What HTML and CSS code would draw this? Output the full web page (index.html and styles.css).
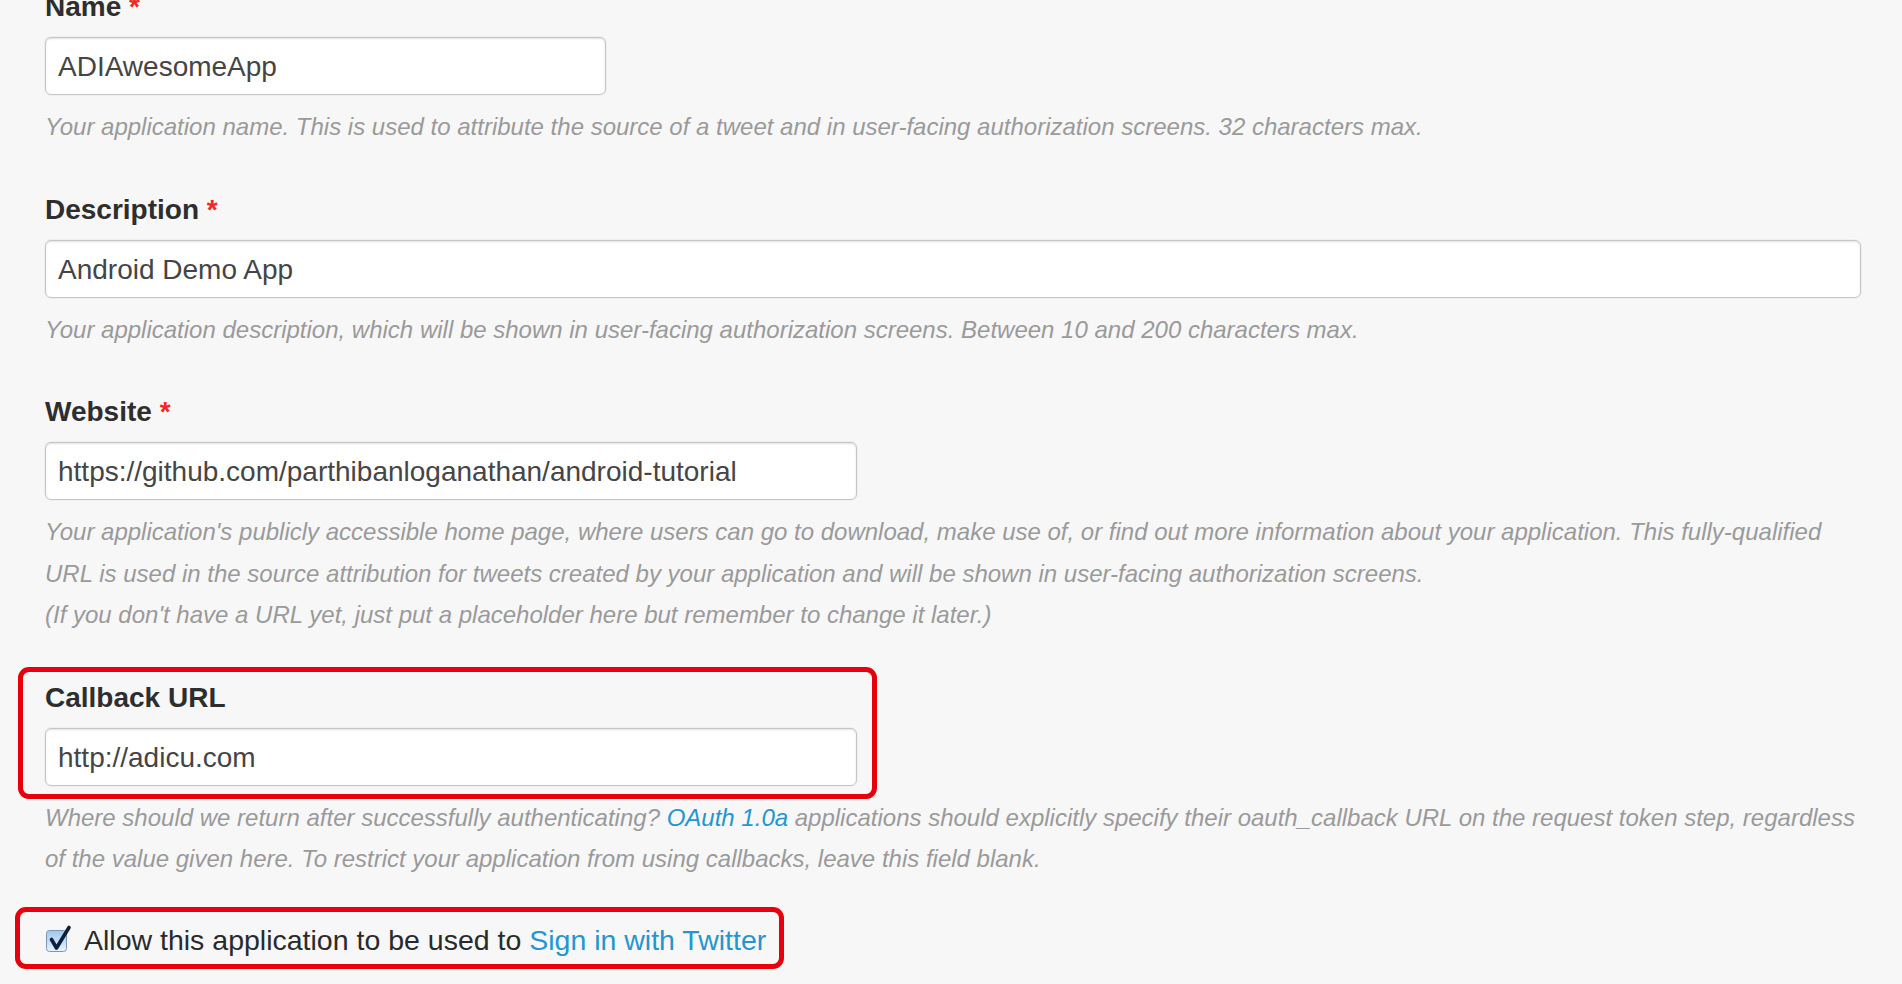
FILE: index.html
```html
<!DOCTYPE html>
<html lang="en">
<head>
<meta charset="utf-8">
<title>Application Details</title>
<link rel="stylesheet" href="styles.css">
</head>
<body>
<form class="app-form">
  <div class="field">
    <label class="field-label">Name <span class="req">*</span></label>
    <input class="field-input input-name" type="text" value="ADIAwesomeApp">
    <p class="field-help">Your application name. This is used to attribute the source of a tweet and in user-facing authorization screens. 32 characters max.</p>
  </div>

  <div class="field">
    <label class="field-label">Description <span class="req">*</span></label>
    <input class="field-input input-full" type="text" value="Android Demo App">
    <p class="field-help">Your application description, which will be shown in user-facing authorization screens. Between 10 and 200 characters max.</p>
  </div>

  <div class="field">
    <label class="field-label">Website <span class="req">*</span></label>
    <input class="field-input input-wide" type="text" value="https://github.com/parthibanloganathan/android-tutorial">
    <p class="field-help">Your application's publicly accessible home page, where users can go to download, make use of, or find out more information about your application. This fully-qualified URL is used in the source attribution for tweets created by your application and will be shown in user-facing authorization screens.<br>(If you don't have a URL yet, just put a placeholder here but remember to change it later.)</p>
  </div>

  <div class="field">
    <div class="callout callout-field">
      <label class="field-label">Callback URL</label>
      <input class="field-input input-wide" type="text" value="http://adicu.com">
    </div>
    <p class="field-help">Where should we return after successfully authenticating? <a class="link" href="#">OAuth 1.0a</a> applications should explicitly specify their oauth_callback URL on the request token step, regardless of the value given here. To restrict your application from using callbacks, leave this field blank.</p>
  </div>

  <div class="callout callout-check">
    <div class="check-row">
      <svg class="check-box" width="27" height="30" viewBox="0 0 27 30" aria-hidden="true">
        <defs>
          <linearGradient id="cbg" x1="0" y1="0" x2="0" y2="1">
            <stop offset="0" stop-color="#9fc8f0"/>
            <stop offset="0.55" stop-color="#c4def7"/>
            <stop offset="1" stop-color="#eaf4fe"/>
          </linearGradient>
        </defs>
        <rect x="1.5" y="6.5" width="20" height="21" rx="3" ry="3" fill="url(#cbg)" stroke="#7d95b3" stroke-width="1"/>
        <path d="M6.5 15.5 L11.5 24 L24 3.5" fill="none" stroke="#0e1f3b" stroke-width="3.6" stroke-linecap="round" stroke-linejoin="round"/>
      </svg>
      <span class="check-text">Allow this application to be used to <a class="link" href="#">Sign in with Twitter</a></span>
    </div>
  </div>
</form>
</body>
</html>
```

FILE: styles.css
```css
html, body {
  margin: 0;
  padding: 0;
  background: #f7f7f7;
}

body {
  font-family: "Liberation Sans", Arial, Helvetica, sans-serif;
  color: #333333;
}

.app-form {
  margin-top: -13px;
  padding: 0 41px 0 45px;
  display: flex;
  flex-direction: column;
  align-items: flex-start;
}

.field {
  display: flex;
  flex-direction: column;
  align-items: flex-start;
  align-self: stretch;
  margin-bottom: 42px;
}

.field-label {
  display: block;
  font-size: 28px;
  font-weight: bold;
  line-height: 40px;
  color: #2e2e2e;
  margin-bottom: 10px;
}

.req {
  color: #f02828;
}

.field-input {
  box-sizing: border-box;
  height: 58px;
  margin: 0;
  padding: 2px 12px 0;
  border: 1px solid #c6c6c6;
  border-radius: 6px;
  background: #ffffff;
  box-shadow: inset 0 1px 2px rgba(0, 0, 0, 0.12), 0 0 0 1px rgba(0, 0, 0, 0.03);
  font-family: "Liberation Sans", Arial, Helvetica, sans-serif;
  font-size: 28px;
  color: #454545;
  outline: none;
}

.input-name {
  width: 561px;
}

.input-wide {
  width: 812px;
}

.input-full {
  align-self: stretch;
  width: auto;
}

.field-help {
  margin: 11px -6px 0 0;
  font-size: 24px;
  line-height: 41.5px;
  font-style: italic;
  color: #9a9a9a;
}

.link {
  color: #2496cf;
  text-decoration: none;
}

.callout {
  border: 5px solid #e6000c;
  border-radius: 11px;
}

.callout-field {
  display: flex;
  flex-direction: column;
  align-items: flex-start;
  margin: -11px 0 -13px -27px;
  padding: 6px 15px 8px 22px;
}

.callout-check {
  display: flex;
  margin: -15px 0 0 -30px;
  padding: 8px 13px 4px 25px;
}

.check-row {
  display: flex;
  align-items: center;
  height: 40px;
}

.check-box {
  display: block;
  margin-top: -2px;
  margin-right: 12px;
}

.check-text {
  font-size: 28.5px;
  line-height: 40px;
  color: #2a2a2a;
  white-space: nowrap;
}
```
